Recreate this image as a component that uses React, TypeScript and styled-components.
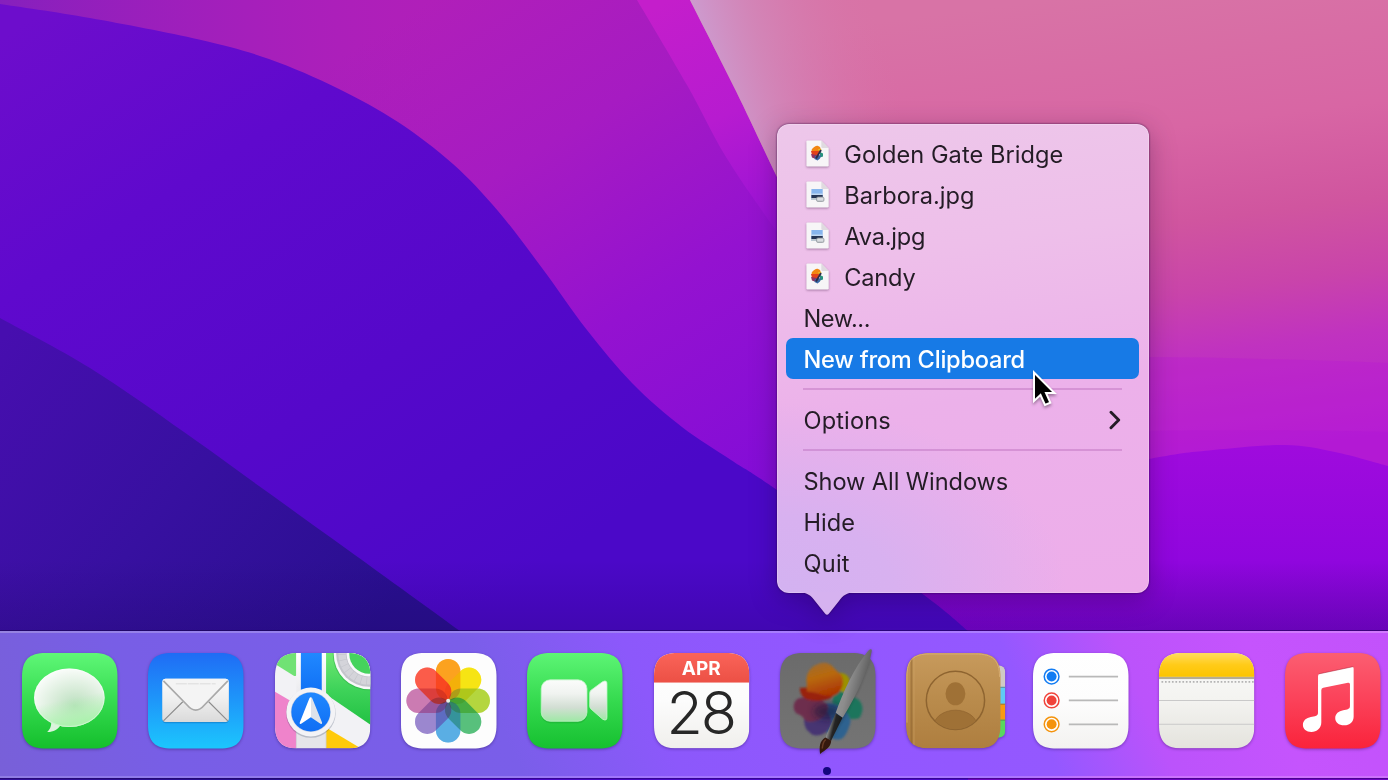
import React from "react";
import styled, { createGlobalStyle } from "styled-components";

const GlobalStyle = createGlobalStyle`
  *, *::before, *::after { box-sizing: border-box; }
  html, body { margin: 0; padding: 0; overflow: hidden; }
  body { font-family: Inter, "Liberation Sans", sans-serif; }
`;

const Desktop = styled.main`
  position: relative;
  display: flex;
  flex-direction: column;
  justify-content: flex-end;
  width: 1388px;
  height: 780px;
  overflow: hidden;
  background: #27108a;
`;

const WallpaperSvg = styled.svg`
  position: absolute;
  inset: 0;
  display: block;
`;

const DockBar = styled.nav`
  position: relative;
  display: flex;
  gap: 30.83px;
  height: 147px;
  margin-bottom: 2px;
  padding: 19.5px 0 0 22px;
  border-top: 2px solid rgba(255, 255, 255, 0.22);
  border-bottom: 2px solid rgba(255, 255, 255, 0.18);
  background: linear-gradient(66deg, #7860d8 0%, #785ee6 12%, #7a5ee9 36%, #8c58fb 47%, #9257ff 60%, #9458ff 73%, #bb53fb 81%, #c554fd 90%, #c252fb 100%);
  box-shadow: 0 -1px 0 rgba(20, 0, 70, 0.5), 0 1px 0 rgba(20, 0, 70, 0.4);
`;

const DockItem = styled.div`
  position: relative;
  flex: none;
  width: 95.5px;
  height: 95.5px;
`;

const TileSvg = styled.svg`
  display: block;
  overflow: visible;
  filter: drop-shadow(0 1px 1.5px rgba(20, 0, 60, 0.35));
`;

const RunningDot = styled.span`
  position: absolute;
  left: 43.5px;
  top: 114px;
  width: 8px;
  height: 8px;
  border-radius: 50%;
  background: #14067e;
`;

const Popover = styled.section`
  position: absolute;
  left: 777px;
  top: 124px;
  width: 371.5px;
  height: 468.5px;
  filter: drop-shadow(0 0 0.8px rgba(40, 0, 60, 0.75)) drop-shadow(0 6px 13px rgba(20, 0, 40, 0.3));
`;

const MenuList = styled.ul`
  display: flex;
  flex-direction: column;
  height: 100%;
  margin: 0;
  padding: 9.5px 9.3px;
  list-style: none;
  border-radius: 12px;
  background:
    radial-gradient(ellipse 290px 190px at 0% 100%, #d3b2f1 0%, #d8b1f0 40%, rgba(236, 175, 234, 0) 100%),
    linear-gradient(172deg, #edc7ea 0%, #eebfea 28%, #ecb1ea 58%, #edadea 100%);
  box-shadow: inset 0 0 0 1px rgba(255, 255, 255, 0.22);
`;

const MenuRow = styled.li<{ $active?: boolean }>`
  display: flex;
  flex: none;
  align-items: center;
  height: 40.9px;
  padding: 0 18px 0 17.2px;
  border-radius: 7px;
  color: ${(p) => (p.$active ? "#ffffff" : "#241c26")};
  background: ${(p) => (p.$active ? "#177ae6" : "transparent")};
  font-weight: ${(p) => (p.$active ? 500 : 400)};
`;

const Label = styled.span<{ $spacing: number }>`
  padding-top: 2.6px;
  font-size: 23.6px;
  line-height: 30px;
  letter-spacing: ${(p) => p.$spacing}px;
  white-space: nowrap;
`;

const FileSvg = styled.svg`
  flex: none;
  margin: 0 15px 0 2.8px;
  overflow: visible;
  filter: drop-shadow(0 1px 0.8px rgba(60, 20, 60, 0.4));
`;

const ChevronSvg = styled.svg`
  margin-left: auto;
`;

const Separator = styled.li`
  display: flex;
  flex: none;
  align-items: center;
  height: 20.5px;
  padding: 0 17px;

  &::before {
    content: "";
    flex: 1;
    height: 2px;
    background: rgba(175, 95, 178, 0.36);
  }
`;

const TailSvg = styled.svg`
  position: absolute;
  left: 20px;
  top: 467.5px;
`;

const CursorSvg = styled.svg`
  position: absolute;
  left: 1031px;
  top: 367px;
  overflow: visible;
  filter: drop-shadow(0 2px 1.5px rgba(0, 0, 0, 0.35));
`;

type Point = [number, number];

/** Smooth curve segments running through every point after the first. */
function curve(points: Point[]) {
  let d = "";
  for (let i = 0; i < points.length - 1; i++) {
    const p0 = points[i - 1] ?? points[i];
    const p1 = points[i];
    const p2 = points[i + 1];
    const p3 = points[i + 2] ?? p2;
    d += `C${p1[0] + (p2[0] - p0[0]) / 6} ${p1[1] + (p2[1] - p0[1]) / 6} ${p2[0] - (p3[0] - p1[0]) / 6} ${p2[1] - (p3[1] - p1[1]) / 6} ${p2[0]} ${p2[1]}`;
  }
  return d;
}

const BLUE_RIDGE = curve([
  [0, 4], [90, 18], [199, 39.5], [269, 59], [338, 88.5], [398, 122], [453, 164], [498, 211], [542, 268],
  [587, 330], [632, 383], [682, 427], [731, 460], [777, 490], [920, 592], [968, 631],
]);
const DARK_RIDGE = curve([[0, 318], [90, 368], [184, 432], [259, 486], [348, 550], [460, 631]]);
const RIBBON_EDGE = curve([[637, 0], [687, 85], [726, 157], [777, 232], [840, 320]]);
const PEAK_EDGE = curve([[690, 0], [736, 91], [777, 177], [830, 285], [900, 400]]);
const WAVE = curve([[820, 560], [1000, 490], [1149, 459], [1213, 450], [1285, 445], [1335, 452], [1388, 466]]);

function Wallpaper() {
  return (
    <WallpaperSvg width="1388" height="780" viewBox="0 0 1388 780" aria-hidden="true">
      <defs>
        <linearGradient id="w-mag" gradientUnits="userSpaceOnUse" x1="430" y1="0" x2="760" y2="520">
          <stop offset="0" stopColor="#b01fb9" />
          <stop offset=".3" stopColor="#a61bc2" />
          <stop offset=".6" stopColor="#9412d0" />
          <stop offset="1" stopColor="#810cd8" />
        </linearGradient>
        <linearGradient id="w-magL" gradientUnits="userSpaceOnUse" x1="0" y1="60" x2="430" y2="0">
          <stop offset="0" stopColor="#8420bd" />
          <stop offset=".5" stopColor="#981fbd" stopOpacity=".6" />
          <stop offset="1" stopColor="#a81fbd" stopOpacity="0" />
        </linearGradient>
        <linearGradient id="w-blue" gradientUnits="userSpaceOnUse" x1="60" y1="0" x2="460" y2="620">
          <stop offset="0" stopColor="#6d0dcc" />
          <stop offset=".3" stopColor="#5f09cd" />
          <stop offset=".65" stopColor="#5508ca" />
          <stop offset="1" stopColor="#4b08c8" />
        </linearGradient>
        <linearGradient id="w-dark" gradientUnits="userSpaceOnUse" x1="0" y1="340" x2="360" y2="640">
          <stop offset="0" stopColor="#470eaf" />
          <stop offset=".5" stopColor="#3710a0" />
          <stop offset="1" stopColor="#290f8f" />
        </linearGradient>
        <linearGradient id="w-ribbon" gradientUnits="userSpaceOnUse" x1="670" y1="0" x2="780" y2="230">
          <stop offset="0" stopColor="#c41ecb" />
          <stop offset=".5" stopColor="#b71bd0" />
          <stop offset="1" stopColor="#9712d6" />
        </linearGradient>
        <linearGradient id="w-pink" gradientUnits="userSpaceOnUse" x1="1050" y1="0" x2="1110" y2="470">
          <stop offset="0" stopColor="#d873a6" />
          <stop offset=".3" stopColor="#d866a4" />
          <stop offset=".5" stopColor="#d0559f" />
          <stop offset=".65" stopColor="#c944aa" />
          <stop offset=".78" stopColor="#c032c0" />
          <stop offset="1" stopColor="#b720d2" />
        </linearGradient>
        <linearGradient id="w-lilac" gradientUnits="userSpaceOnUse" x1="712" y1="70" x2="880" y2="20">
          <stop offset="0" stopColor="#cd9ace" />
          <stop offset=".3" stopColor="#d18abc" stopOpacity=".8" />
          <stop offset="1" stopColor="#d873a8" stopOpacity="0" />
        </linearGradient>
        <linearGradient id="w-violet" x1="0" y1="0" x2="0" y2="1">
          <stop offset="0" stopColor="#9f0bdd" />
          <stop offset=".35" stopColor="#9006de" />
          <stop offset=".6" stopColor="#7604cc" />
          <stop offset="1" stopColor="#7004c4" />
        </linearGradient>
        <linearGradient id="w-shade" x1="0" y1="0" x2="0" y2="1">
          <stop offset="0" stopColor="#12004a" stopOpacity="0" />
          <stop offset="1" stopColor="#12004a" stopOpacity=".18" />
        </linearGradient>
      </defs>
      <rect width="1388" height="780" fill="url(#w-mag)" />
      <rect width="440" height="300" fill="url(#w-magL)" />
      <path d={`M637 0${RIBBON_EDGE}L900 0Z`} fill="url(#w-ribbon)" />
      <path d={`M690 0${PEAK_EDGE}V560H1388V0Z`} fill="url(#w-pink)" />
      <path d={`M690 0${PEAK_EDGE}V0Z`} fill="url(#w-lilac)" />
      <path d="M900 370C1040 352 1200 356 1388 363V560H900Z" fill="#b712d8" opacity=".26" />
      <path d="M900 445C1080 430 1180 428 1388 432V560H900Z" fill="#a80bd8" opacity=".16" />
      <path d={`M820 560${WAVE}V780H820Z`} fill="url(#w-violet)" />
      <path d={`M0 4${BLUE_RIDGE}V780H0Z`} fill="url(#w-blue)" />
      <path d={`M0 318${DARK_RIDGE}V780H0Z`} fill="url(#w-dark)" />
      <rect y="560" width="1388" height="72" fill="url(#w-shade)" />
    </WallpaperSvg>
  );
}

const SQUIRCLE = "M24 0H72C89 0 96 7 96 24V72C96 89 89 96 72 96H24C7 96 0 89 0 72V24C0 7 7 0 24 0Z";

function Vertical({ id, stops }: { id: string; stops: string[] }) {
  return (
    <linearGradient id={id} x1="0" y1="0" x2="0" y2="1">
      {stops.map((c, i) => (
        <stop key={i} offset={i / (stops.length - 1)} stopColor={c} />
      ))}
    </linearGradient>
  );
}

function Tile({ children }: { children: React.ReactNode }) {
  return (
    <TileSvg width="95.5" height="95.5" viewBox="0 0 96 96" aria-hidden="true">
      {children}
    </TileSvg>
  );
}

function MessagesIcon() {
  return (
    <Tile>
      <defs>
        <Vertical id="msg-bg" stops={["#5ff777", "#36db50", "#14bf2c"]} />
        <radialGradient id="msg-b" cx=".58" cy=".64" r=".66">
          <stop offset="0" stopColor="#b9dfbd" />
          <stop offset=".45" stopColor="#d8ecd9" />
          <stop offset="1" stopColor="#fbfdfb" />
        </radialGradient>
        <linearGradient id="msg-g" x1="0" y1="0" x2=".25" y2="1">
          <stop offset=".6" stopColor="#a9f2ab" stopOpacity="0" />
          <stop offset="1" stopColor="#a9f2ab" stopOpacity=".9" />
        </linearGradient>
      </defs>
      <path d={SQUIRCLE} fill="url(#msg-bg)" />
      <path d="M29 66C30 72 29 76 25.300 79.300C31 79.500 36 77 39 72Z" fill="#dcf3dd" />
      <ellipse cx="47.600" cy="45" rx="35.500" ry="29.400" fill="url(#msg-b)" />
      <ellipse cx="47.600" cy="45" rx="35.500" ry="29.400" fill="url(#msg-g)" />
      <ellipse cx="47.600" cy="45" rx="35" ry="28.900" fill="none" stroke="#fff" strokeOpacity=".35" />
    </Tile>
  );
}

function MailIcon() {
  return (
    <Tile>
      <defs>
        <Vertical id="mail-bg" stops={["#1f6cf5", "#1e97fa", "#1cc6fd"]} />
        <Vertical id="mail-e" stops={["#fbfbfb", "#eeeeee", "#dadada"]} />
      </defs>
      <path d={SQUIRCLE} fill="url(#mail-bg)" />
      <rect x="14.300" y="27.500" width="67" height="43" rx="4" fill="#07488f" opacity=".3" />
      <rect x="14.300" y="26" width="67" height="43.300" rx="3.500" fill="url(#mail-e)" />
      <path d="M15.500 68.300L35 49M80.200 68.300L61 49" stroke="#8c8c8c" strokeWidth="1.100" fill="none" />
      <path d="M15.500 28L39.500 52.500C45 59 51 59 56.500 52.500L80.300 28C79.500 26.500 78.500 26 77 26H18.500C17 26 16 26.500 15.500 28Z" fill="#f4f4f4" />
      <path d="M15.500 28L39.500 52.500C45 59 51 59 56.500 52.500L80.300 28" fill="none" stroke="#a9a9a9" strokeWidth="1.700" />
      <path d="M28 31H68" stroke="#e3e3e3" strokeWidth="1.500" strokeDasharray="11 1" />
    </Tile>
  );
}

function MapsIcon() {
  return (
    <Tile>
      <defs>
        <clipPath id="map-c"><path d={SQUIRCLE} /></clipPath>
        <Vertical id="map-g" stops={["#6fe873", "#3fd35a", "#22c143"]} />
        <Vertical id="map-b" stops={["#2088ff", "#0f6ef4"]} />
        <Vertical id="map-r" stops={["#ffffff", "#e6e6ea"]} />
        <linearGradient id="map-a" x1="0" y1="0" x2="1" y2="0">
          <stop offset=".5" stopColor="#ffffff" />
          <stop offset=".5" stopColor="#dde2ea" />
        </linearGradient>
      </defs>
      <g clipPath="url(#map-c)">
        <rect width="96" height="96" fill="#f2f2f5" />
        <path d="M0 0H21.300V22C21 23.500 20 23.500 18.500 22.700L0 11Z" fill="#70e274" />
        <path d="M0 39L21.500 51.500V96H0Z" fill="#ef83cb" />
        <path d="M51.300 0H96V72L57 45.500L51.300 41Z" fill="url(#map-g)" />
        <path d="M51.300 75L84 94.500V96H51.300Z" fill="#ffca0a" />
        <path d="M21.500 48H51.300V96H21.500Z" fill="#e5e5e9" />
        <rect x="21.500" width="29.800" height="50" fill="url(#map-r)" />
        <rect x="26" width="21" height="44" fill="url(#map-b)" />
        <path d="M51.300 75V96M21.500 50V96" stroke="#c9c9d1" strokeWidth=".7" />
        <circle cx="94.500" cy="1" r="36.500" fill="#1c9836" opacity=".35" />
        <circle cx="94.500" cy="1" r="35.500" fill="#f8f8fa" />
        <circle cx="94.500" cy="1" r="33" fill="#c4c5cc" />
        <circle cx="94.500" cy="1" r="27" fill="none" stroke="#d4d4da" strokeWidth="7.500" strokeDasharray="5 .6" />
        <circle cx="94.500" cy="1" r="22.500" fill="#f8f8fa" />
        <circle cx="94.500" cy="1" r="19.800" fill="#45d35d" />
      </g>
      <circle cx="36" cy="60.300" r="25" fill="#30405c" opacity=".25" />
      <circle cx="36" cy="59.300" r="24.600" fill="#f3f3f6" />
      <circle cx="36" cy="59.300" r="20.200" fill="#d2d8e4" />
      <circle cx="36" cy="59.300" r="19.600" fill="url(#map-b)" />
      <path d="M36 44.500Q37 44.500 37.500 45.800L47.300 69.800Q47.600 71.800 45.700 71.200L36 64.500L26.300 71.200Q24.400 71.800 24.900 69.800L34.500 45.800Q35 44.500 36 44.500Z" fill="url(#map-a)" />
    </Tile>
  );
}

const PETALS = ["#fca21f", "#f6e414", "#b4d63e", "#58c07c", "#5aaee4", "#9b87cf", "#cb7bb2", "#fb5c4a"];

const PetalShape = styled.rect<{ $blended?: boolean }>`
  mix-blend-mode: ${(p) => (p.$blended ? "multiply" : "normal")};
`;

const PetalGroup = styled.g`
  isolation: isolate;
`;

function Petals({ blended }: { blended?: boolean }) {
  return (
    <>
      {PETALS.map((color, i) => (
        <PetalShape
          key={color}
          $blended={blended}
          x="-12.300"
          y="-42"
          width="24.600"
          height="41.500"
          rx="12.300"
          fill={color}
          transform={`rotate(${i * 45})`}
        />
      ))}
    </>
  );
}

function PhotosIcon() {
  return (
    <Tile>
      <path d={SQUIRCLE} fill="#fdfdfd" />
      <PetalGroup transform="translate(47.400 48)">
        <Petals blended />
        <g opacity=".38"><Petals /></g>
        <circle r="2" fill="#e9efe6" />
      </PetalGroup>
    </Tile>
  );
}

function FaceTimeIcon() {
  return (
    <Tile>
      <defs>
        <Vertical id="ft-bg" stops={["#5df575", "#35da4f", "#16c030"]} />
        <Vertical id="ft-c" stops={["#fbfcfb", "#f0f3f0", "#d2ded3", "#9fe8a6"]} />
      </defs>
      <path d={SQUIRCLE} fill="url(#ft-bg)" />
      <rect x="14.300" y="28.500" width="46.300" height="42" rx="9" fill="#0d7a20" opacity=".22" />
      <rect x="14.300" y="27" width="46" height="41.600" rx="9" fill="url(#ft-c)" stroke="#c5f6ca" strokeWidth=".8" />
      <path d="M63 40.500Q63 38.800 64.300 37.500L75.800 29Q80.400 26.500 80.400 31V64.500Q80.400 69 76 66.500L64.500 56.500Q63 55 63 53.500Z" fill="url(#ft-c)" stroke="#c5f6ca" strokeWidth=".8" />
    </Tile>
  );
}

function CalendarIcon() {
  return (
    <Tile>
      <defs>
        <clipPath id="cal-c"><path d={SQUIRCLE} /></clipPath>
        <Vertical id="cal-bg" stops={["#ffffff", "#fcfcfc", "#f0efec"]} />
        <Vertical id="cal-r" stops={["#fa6459", "#ec5045"]} />
      </defs>
      <g clipPath="url(#cal-c)">
        <rect width="96" height="96" fill="url(#cal-bg)" />
        <rect width="96" height="29.700" fill="url(#cal-r)" />
      </g>
      <text x="28" y="22.600" textLength="39" lengthAdjust="spacingAndGlyphs" fontFamily="Inter, sans-serif" fontWeight="700" fontSize="18.500" fill="#fff">APR</text>
      <text x="12.500" y="81.200" textLength="69" lengthAdjust="spacingAndGlyphs" letterSpacing="-2" fontFamily="Inter, sans-serif" fontWeight="300" fontSize="59" fill="#272727">28</text>
    </Tile>
  );
}

function PaintIcon() {
  return (
    <Tile>
      <defs>
        <clipPath id="px-c"><path d={SQUIRCLE} /></clipPath>
        <Vertical id="px-bg" stops={["#6b6b6b", "#747474"]} />
        <filter id="px-soft" x="-30%" y="-30%" width="160%" height="160%"><feGaussianBlur stdDeviation="1.100" /></filter>
        <filter id="px-soft2" x="-50%" y="-50%" width="200%" height="200%"><feGaussianBlur stdDeviation="4" /></filter>
        <linearGradient id="px-o" x1=".3" y1="0" x2=".6" y2="1">
          <stop offset="0" stopColor="#a06c30" />
          <stop offset=".4" stopColor="#b8690c" />
          <stop offset="1" stopColor="#aa3204" />
        </linearGradient>
        <linearGradient id="px-h" x1="0" y1="0" x2="1" y2=".5">
          <stop offset="0" stopColor="#a2a2a2" />
          <stop offset=".5" stopColor="#8c8c8c" />
          <stop offset="1" stopColor="#4c4c4c" />
        </linearGradient>
        <linearGradient id="px-f" x1="0" y1="0" x2="1" y2=".4">
          <stop offset="0" stopColor="#222" />
          <stop offset=".35" stopColor="#898989" />
          <stop offset=".6" stopColor="#252525" />
          <stop offset="1" stopColor="#171717" />
        </linearGradient>
      </defs>
      <path d={SQUIRCLE} fill="url(#px-bg)" />
      <g clipPath="url(#px-c)">
        <g filter="url(#px-soft)">
          <path d="M52 22C60 18 69 20 70 28C71 35 65 42 56 43Z" fill="#9b9100" />
          <path d="M54 38C63 36 65 42 72 44C84 46 85 58 80 65C72 69 60 64 52 58Z" fill="#1f745c" />
          <path d="M40 52C55 46 70 58 71 69C69 76 66 86 59 87C50 88 48 80 43 73Z" fill="#2f628f" />
          <path d="M24 57C34 50 52 56 52 70C50 82 34 87 29 79C24 76 24 68 24 57Z" fill="#473672" />
          <path d="M18 46C25 42 42 46 48 52C51 62 38 70 28 69C23 67 24 63 17 61C12 57 13 49 18 46Z" fill="#6d2f4e" />
          <path d="M20 35C29 35 45 33 57 37C55 47 43 49 35 48C27 48 20 45 20 35Z" fill="#99210c" />
          <path d="M27 30C25 17 36 9 47 10C54 12 54 17 61 21C67 29 61 45 49 43C41 43 34 38 27 39Z" fill="url(#px-o)" />
        </g>
        <ellipse cx="48" cy="59" rx="14" ry="8" fill="#19133e" opacity=".6" filter="url(#px-soft2)" />
        <path d="M94 0L70 42L52 88L64 66L80 36Z" fill="#222" opacity=".22" filter="url(#px-soft)" />
      </g>
      <path d="M88.500 -2C91 -5 93 -4 92 -1C89 17 78 41 63 65L56 60C63 40 75 14 88.500 -2Z" fill="url(#px-h)" />
      <path d="M56 60.500L62.800 65L51.500 88L45.500 85Z" fill="url(#px-f)" />
      <path d="M45.500 85L51.500 88C51 95 46 97 40.300 101.500C39.500 94 39.500 89 45.500 85Z" fill="#35190e" />
      <path d="M46 87C43 89 43 92 42.500 96" stroke="#74442a" strokeWidth="1.500" fill="none" opacity=".8" />
    </Tile>
  );
}

function ContactsIcon() {
  return (
    <Tile>
      <defs>
        <Vertical id="con-bg" stops={["#c79a5c", "#b98b4c", "#ae7e3f"]} />
        <clipPath id="con-r"><circle cx="49.700" cy="47.700" r="29" /></clipPath>
        <clipPath id="con-t"><rect x="85" y="12.500" width="14.700" height="72.500" rx="6" /></clipPath>
        <clipPath id="con-b"><path d={SQUIRCLE} /></clipPath>
      </defs>
      <g clipPath="url(#con-t)">
        <rect x="85" y="12" width="15" height="23" fill="#d0cac4" />
        <rect x="85" y="34" width="15" height="19" fill="#5fcbf5" />
        <rect x="85" y="51" width="15" height="18" fill="#f99a12" />
        <rect x="85" y="67" width="15" height="19" fill="#58d85f" />
        <path d="M94 34.500H100M94 51.500H100M94 67.500H100" stroke="#55614f" strokeWidth="1" opacity=".55" />
      </g>
      <g clipPath="url(#con-b)">
        <path d="M23 0H71C88 0 95 7 95 24V72C95 89 88 96 71 96H23C7 96 0 89 0 72V24C0 7 7 0 23 0Z" fill="url(#con-bg)" />
        <path d="M5.500 5V91" stroke="#8d6330" strokeWidth="2" opacity=".55" />
        <path d="M8 3V93" stroke="#d2a76b" strokeWidth="1" opacity=".5" />
        <path d="M1 70V24C1 7 7 1 24 1H70C87 1 94 7 94 24" stroke="#dfb67c" strokeWidth="1" opacity=".7" fill="none" />
      </g>
      <circle cx="49.700" cy="47.700" r="29.300" fill="none" stroke="#8e6430" strokeWidth="1.500" />
      <ellipse cx="49.700" cy="41" rx="10" ry="11.500" fill="#9f7136" />
      <ellipse cx="49.700" cy="74" rx="22" ry="16.500" fill="#9f7136" stroke="#8e6430" strokeWidth=".7" clipPath="url(#con-r)" />
    </Tile>
  );
}

function RemindersIcon() {
  const rows = [
    { y: 23.7, color: "#127cf3" },
    { y: 47.7, color: "#f0433a" },
    { y: 71.7, color: "#f4930d" },
  ];
  return (
    <Tile>
      <defs><Vertical id="rem-bg" stops={["#ffffff", "#fdfdfd", "#f3f2f0"]} /></defs>
      <path d={SQUIRCLE} fill="url(#rem-bg)" />
      {rows.map(({ y, color }) => (
        <g key={color}>
          <circle cx="18.700" cy={y} r="7.400" fill="#fff" stroke={color} strokeWidth="1.500" />
          <circle cx="18.700" cy={y} r="5" fill={color} />
          <path d={`M36 ${y}H85.500`} stroke="#b9b9b9" strokeWidth="1.700" />
        </g>
      ))}
    </Tile>
  );
}

function NotesIcon() {
  return (
    <Tile>
      <defs>
        <clipPath id="not-c"><path d={SQUIRCLE} /></clipPath>
        <Vertical id="not-bg" stops={["#fbfbfa", "#f3f3f0", "#e4e3dd"]} />
        <Vertical id="not-y" stops={["#ffdd5e", "#ffcb18", "#fcc400"]} />
      </defs>
      <g clipPath="url(#not-c)">
        <rect width="96" height="96" fill="url(#not-bg)" />
        <rect width="96" height="24" fill="url(#not-y)" />
        <rect y="24" width="96" height="2.200" fill="#b5ad94" />
        <path d="M2.500 29H96" stroke="#b4b4b4" strokeWidth="1.700" strokeDasharray="1.700 1.800" />
        <path d="M0 47.700H96M0 71.700H96" stroke="#c9c9c9" strokeWidth="1.100" />
      </g>
    </Tile>
  );
}

function MusicIcon() {
  return (
    <Tile>
      <defs><Vertical id="mus-bg" stops={["#fb5e71", "#fb4159", "#fa233b"]} /></defs>
      <path d={SQUIRCLE} fill="url(#mus-bg)" />
      <path
        d="M35 20.800L67 14Q69 13.600 69 15.700V64C69 69 65 72.600 59.500 72.600C54 72.600 50.500 69.500 50.500 65.500C50.500 61 54 58.300 58.500 57.500L62.500 56.700C64.500 56.200 65.300 55.200 65.300 53.400V31.500Q65.300 29.500 63.300 29.900L38.500 35Q36.500 35.500 36.500 37.500V69.500C36.500 75.500 32 79.300 26.500 79.300C21.500 79.300 18 76.500 18 72.300C18 68 21.500 65.200 26 64.400L30 63.600C32.300 63.100 33.200 62 33.200 60V23.300Q33.200 21.200 35 20.800Z"
        fill="#fff"
      />
      <path d="M34 21L68.500 13.700" stroke="#a8223a" strokeWidth=".8" opacity=".65" />
    </Tile>
  );
}

const DOCK: { id: string; Icon: () => React.ReactElement; running?: boolean }[] = [
  { id: "messages", Icon: MessagesIcon },
  { id: "mail", Icon: MailIcon },
  { id: "maps", Icon: MapsIcon },
  { id: "photos", Icon: PhotosIcon },
  { id: "facetime", Icon: FaceTimeIcon },
  { id: "calendar", Icon: CalendarIcon },
  { id: "paint", Icon: PaintIcon, running: true },
  { id: "contacts", Icon: ContactsIcon },
  { id: "reminders", Icon: RemindersIcon },
  { id: "notes", Icon: NotesIcon },
  { id: "music", Icon: MusicIcon },
];

function FileIcon({ kind }: { kind: "art" | "jpg" }) {
  return (
    <FileSvg width="23" height="27" viewBox="0 0 23 27" aria-hidden="true">
      <path d="M1.500 .5H15.300L22.700 8V25.300Q22.700 26.500 21.500 26.500H1.500Q.4 26.500 .4 25.300V1.600Q.4 .5 1.500 .5Z" fill="#f7f5f7" />
      <path d="M15.300 .5V6.700Q15.300 8 16.600 8H22.700Z" fill="#dfdadf" />
      {kind === "art" ? (
        <g>
          <path d="M5.500 10C7 7 11 5 12 6C16 7 15 11 12 14L7 15Z" fill="#f28612" />
          <path d="M5 11L13 11L12 16L6 15Z" fill="#e3421b" />
          <path d="M12 9L15.500 9L14 13Z" fill="#e3bd29" />
          <path d="M5 14L11 15L10 19L6 17.500Z" fill="#8f3562" />
          <path d="M14 12L17 13.500V16.500L14 17.500Z" fill="#27927c" />
          <path d="M9 16L15 15L14 18.500L11.500 20.500L8.500 19Z" fill="#3969a6" />
          <path d="M15 10L10 18.500" stroke="#312b47" strokeWidth="1.800" />
        </g>
      ) : (
        <g>
          <rect x="5.400" y="8" width="11.300" height="11" fill="#87b5ed" />
          <rect x="5.400" y="12.500" width="11.300" height="1.500" fill="#c0d8f2" />
          <path d="M5.400 14H16.700V17H5.400Z" fill="#243454" />
          <rect x="5.400" y="17" width="7" height="2" fill="#bcc7cf" />
          <rect x="10.500" y="16" width="7.500" height="4.500" rx="1.500" fill="#c7cbd0" stroke="#8c9298" strokeWidth=".7" />
          <path d="M11.500 18H17" stroke="#edf0f2" strokeWidth="1" />
        </g>
      )}
    </FileSvg>
  );
}

type Entry =
  | { separator: true }
  | { separator?: false; label: string; spacing: number; file?: "art" | "jpg"; active?: boolean; submenu?: boolean };

const MENU: Entry[] = [
  { label: "Golden Gate Bridge", spacing: 0.06, file: "art" },
  { label: "Barbora.jpg", spacing: 0, file: "jpg" },
  { label: "Ava.jpg", spacing: -0.2, file: "jpg" },
  { label: "Candy", spacing: -0.2, file: "art" },
  { label: "New...", spacing: -0.4 },
  { label: "New from Clipboard", spacing: -0.24, active: true },
  { separator: true },
  { label: "Options", spacing: 0.14, submenu: true },
  { separator: true },
  { label: "Show All Windows", spacing: -0.08 },
  { label: "Hide", spacing: 0 },
  { label: "Quit", spacing: 0.2 },
];

function ContextMenu() {
  return (
    <Popover>
      <MenuList>
        {MENU.map((entry, i) =>
          entry.separator ? (
            <Separator key={i} />
          ) : (
            <MenuRow key={i} $active={entry.active}>
              {entry.file && <FileIcon kind={entry.file} />}
              <Label $spacing={entry.spacing}>{entry.label}</Label>
              {entry.submenu && (
                <ChevronSvg width="12" height="20" viewBox="0 0 12 20" aria-hidden="true">
                  <path d="M2 2.200L9.700 10L2 17.800" fill="none" stroke="#241c26" strokeWidth="2.900" strokeLinecap="round" strokeLinejoin="round" />
                </ChevronSvg>
              )}
            </MenuRow>
          )
        )}
      </MenuList>
      <TailSvg width="60" height="24" viewBox="0 0 60 24" aria-hidden="true">
        <path d="M3 0C10 1 14 3 18 9L28 21.500Q30 24 32 21.500L42 9C46 3 50 1 57 0Z" fill="#d6b2f0" />
      </TailSvg>
    </Popover>
  );
}

export default function App() {
  return (
    <Desktop>
      <GlobalStyle />
      <Wallpaper />
      <DockBar>
        {DOCK.map(({ id, Icon, running }) => (
          <DockItem key={id}>
            <Icon />
            {running && <RunningDot />}
          </DockItem>
        ))}
      </DockBar>
      <ContextMenu />
      <CursorSvg width="26" height="42" viewBox="0 0 26 42" aria-hidden="true">
        <path d="M3 5.500V34L9.500 28L14 38L19.300 35.700L15 26H23.500Z" fill="#000" stroke="#fff" strokeWidth="2" strokeLinejoin="miter" />
      </CursorSvg>
    </Desktop>
  );
}
